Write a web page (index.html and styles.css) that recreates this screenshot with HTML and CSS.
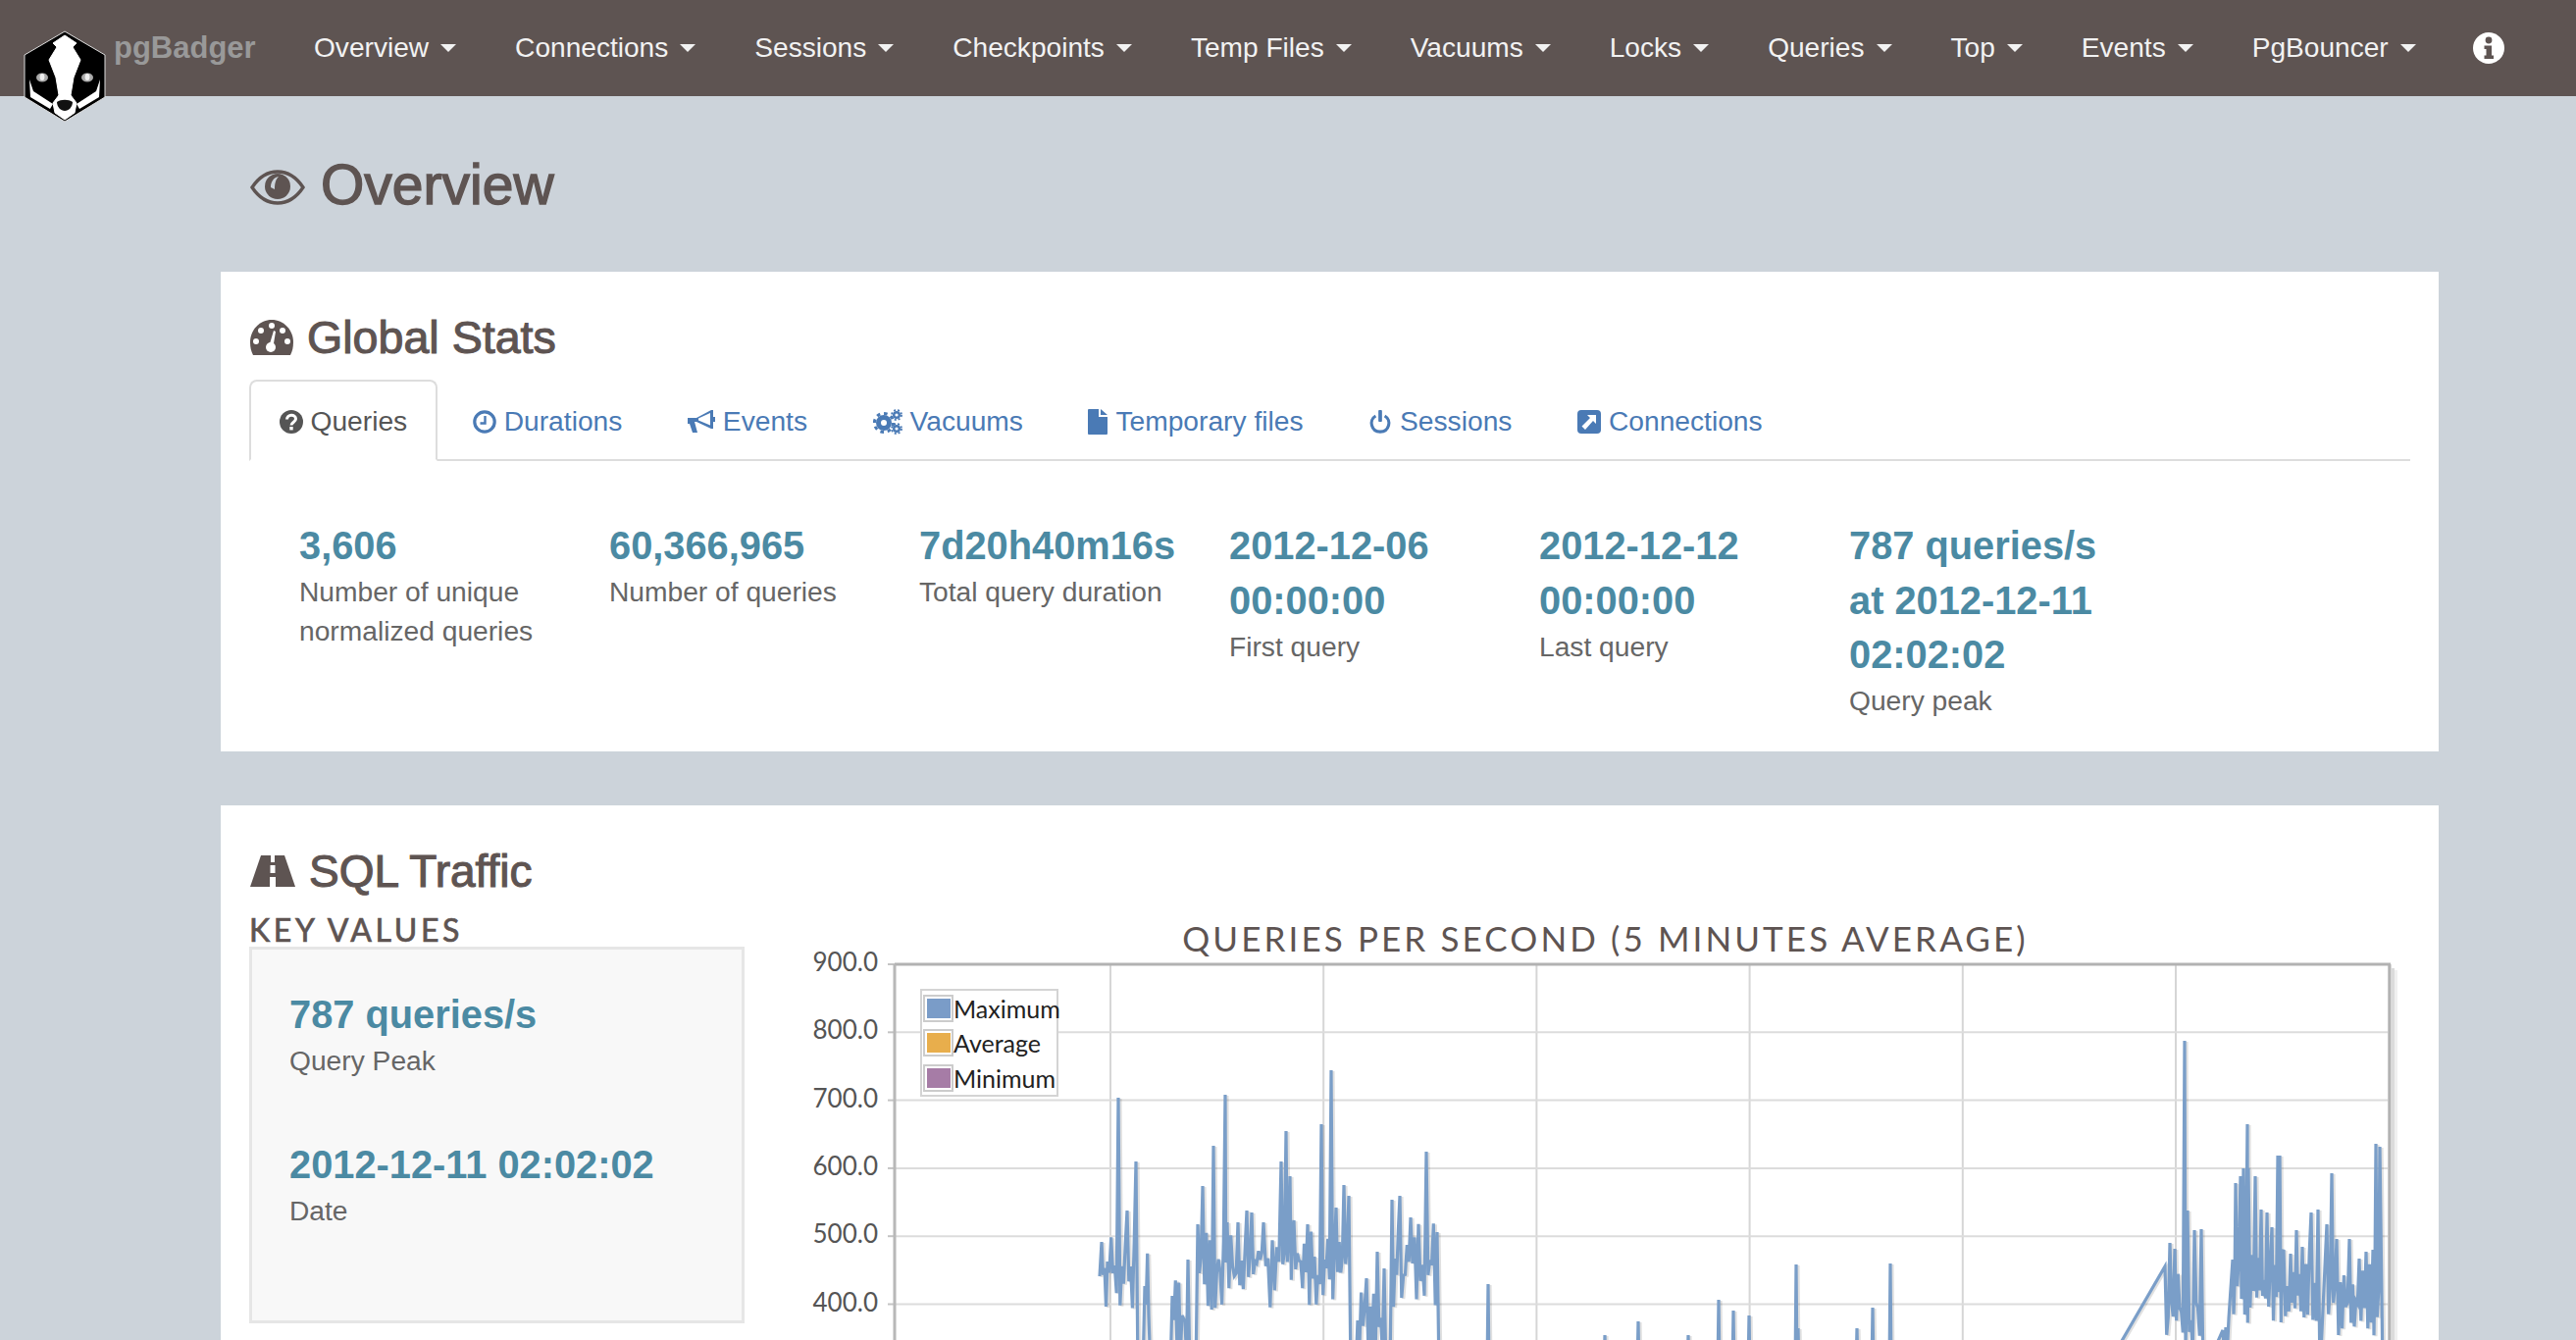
FILE: index.html
```html
<!DOCTYPE html>
<html lang="en">
<head>
    <meta charset="UTF-8">
    <title>pgBadger</title>
    <link rel="stylesheet" href="styles.css">
</head>
<body>
    <nav class="navbar">
        <svg class="logo" viewBox="0 0 84 94">
            <path d="M42 1 L83 25 V68 L42 93 L1 68 V25 Z" fill="#000" stroke="#ddd" stroke-width="1" stroke-linejoin="round"/>
            <path d="M42 5 L54 13 L50 17 L58 30 L51 48 L48 66 L54 74 L52 84 L42 91 L32 84 L30 74 L36 66 L33 48 L26 30 L34 17 L30 13 Z" fill="#fff" stroke="#fff" stroke-width="1" stroke-linejoin="round"/>
            <path d="M6 50 L10 62 L30 75 L27 80 L7 68 Z M78 50 L74 62 L54 75 L57 80 L77 68 Z" fill="#fff"/>
            <ellipse cx="19" cy="48" rx="6" ry="4.5" fill="#aaa"/>
            <ellipse cx="65" cy="48" rx="6" ry="4.5" fill="#aaa"/>
            <ellipse cx="19" cy="47.5" rx="2.4" ry="3.6" fill="#eee"/>
            <ellipse cx="65" cy="47.5" rx="2.4" ry="3.6" fill="#eee"/>
            <path d="M34 73 C38 70 46 70 50 73 C50 78 46 82 42 82 C38 82 34 78 34 73 Z" fill="#111"/>
        </svg>
        <span class="brand">pgBadger</span>
        <a class="nav-item">Overview<i class="caret"></i></a>
        <a class="nav-item">Connections<i class="caret"></i></a>
        <a class="nav-item">Sessions<i class="caret"></i></a>
        <a class="nav-item">Checkpoints<i class="caret"></i></a>
        <a class="nav-item">Temp Files<i class="caret"></i></a>
        <a class="nav-item">Vacuums<i class="caret"></i></a>
        <a class="nav-item">Locks<i class="caret"></i></a>
        <a class="nav-item">Queries<i class="caret"></i></a>
        <a class="nav-item">Top<i class="caret"></i></a>
        <a class="nav-item">Events<i class="caret"></i></a>
        <a class="nav-item">PgBouncer<i class="caret"></i></a>
        <svg class="nav-info" viewBox="0 0 32 32">
            <circle cx="16" cy="16" r="16" fill="#fff"/>
            <circle cx="16" cy="8" r="3.4" fill="#5e5452"/>
            <path d="M11.5 13.5 H19 V23.5 H21 V27 H11.5 V23.5 H13.5 V17 H11.5 Z" fill="#5e5452"/>
        </svg>
    </nav>

    <main class="content">
        <header class="page-title">
            <svg class="title-icon" viewBox="0 0 56 36">
                <path d="M2 18 C10 6 19 2 28 2 C37 2 46 6 54 18 C46 30 37 34 28 34 C19 34 10 30 2 18 Z" fill="none" stroke="currentColor" stroke-width="3.4"/>
                <circle cx="28" cy="17" r="13" fill="currentColor"/>
                <path d="M21 18 C21 12 24 8 29 7 C26 10 25 14 25 20 Z" fill="#ccd3da"/>
            </svg>
            <h1>Overview</h1>
        </header>

        <section class="card">
            <h2>
                <svg class="h2-icon gauge" viewBox="0 0 44 36">
                    <path d="M22 0 C34 0 44 10 44 23 C44 28 43 32 41 36 H3 C1 32 0 28 0 23 C0 10 10 0 22 0 Z" fill="currentColor"/>
                    <g fill="#fff">
                        <circle cx="22" cy="6" r="3"/><circle cx="11" cy="11" r="3"/><circle cx="33" cy="11" r="3"/>
                        <circle cx="6" cy="22" r="3"/><circle cx="38" cy="22" r="3"/>
                        <circle cx="21" cy="28" r="5"/>
                        <path d="M19.5 26 L24 11 L26 12 L23.5 27 Z"/>
                    </g>
                </svg>
                Global Stats
            </h2>
            <div class="tabs">
                <a class="tab active">
                    <svg class="tab-icon" viewBox="0 0 24 24"><circle cx="12" cy="12" r="12" fill="currentColor"/><path d="M7.5 9.5 C7.5 3.8 16.5 3.8 16.5 9 C16.5 12.5 12 12.5 12 15.5" fill="none" stroke="#fff" stroke-width="3"/><rect x="10.3" y="17" width="3.4" height="3.4" fill="#fff"/></svg>
                    Queries
                </a>
                <a class="tab">
                    <svg class="tab-icon" viewBox="0 0 24 24"><circle cx="12" cy="12" r="10.2" fill="none" stroke="currentColor" stroke-width="3.2"/><path d="M12.5 6 V13.5 H7.5" fill="none" stroke="currentColor" stroke-width="2.4"/></svg>
                    Durations
                </a>
                <a class="tab">
                    <svg class="tab-icon wide" viewBox="0 0 28 26"><path d="M0 9 H9 L24 1 H26 V20 H24 L9 13 H7 L10 24 H5 L2 15 H0 Z" fill="currentColor"/><path d="M11 9.5 L23 4 V16.5 L11 11.5 Z" fill="#fff"/><rect x="26" y="8" width="2" height="5" fill="currentColor"/></svg>
                    Events
                </a>
                <a class="tab">
                    <svg class="tab-icon wider" viewBox="0 0 30 26"><g fill="none" stroke="currentColor"><circle cx="11" cy="14" r="5.5" stroke-width="5"/><circle cx="11" cy="14" r="9.6" stroke-width="3" stroke-dasharray="3.6 3.9"/><circle cx="24" cy="6" r="2.8" stroke-width="2.4"/><circle cx="24" cy="6" r="5" stroke-width="1.8" stroke-dasharray="2 2"/><circle cx="24" cy="20" r="2.8" stroke-width="2.4"/><circle cx="24" cy="20" r="5" stroke-width="1.8" stroke-dasharray="2 2"/></g></svg>
                    Vacuums
                </a>
                <a class="tab">
                    <svg class="tab-icon narrow" viewBox="0 0 20 26"><path d="M1 0 H11 V8 H20 V25 Q20 26 19 26 H1 Q0 26 0 25 V1 Q0 0 1 0 Z M13 0 L20 6 H13 Z" fill="currentColor"/></svg>
                    Temporary files
                </a>
                <a class="tab">
                    <svg class="tab-icon" viewBox="0 0 24 26"><path d="M7 6.5 C-1 11 2 24 12 24 C22 24 25 11 17 6.5" fill="none" stroke="currentColor" stroke-width="3.4"/><rect x="10" y="0" width="4" height="13" rx="1" fill="currentColor"/></svg>
                    Sessions
                </a>
                <a class="tab">
                    <svg class="tab-icon" viewBox="0 0 24 24"><rect width="24" height="24" rx="4" fill="currentColor"/><path d="M10 5 H19 V14 L16 11 L8 20 L4.5 16.5 L13 8 Z" fill="#fff"/></svg>
                    Connections
                </a>
            </div>
            <div class="stats">
                <div class="stat"><div class="value">3,606</div><div class="label">Number of unique normalized queries</div></div>
                <div class="stat"><div class="value">60,366,965</div><div class="label">Number of queries</div></div>
                <div class="stat"><div class="value">7d20h40m16s</div><div class="label">Total query duration</div></div>
                <div class="stat"><div class="value">2012-12-06 00:00:00</div><div class="label">First query</div></div>
                <div class="stat"><div class="value">2012-12-12 00:00:00</div><div class="label">Last query</div></div>
                <div class="stat"><div class="value">787 queries/s at 2012-12-11 02:02:02</div><div class="label">Query peak</div></div>
            </div>
        </section>

        <section class="card traffic">
            <h2>
                <svg class="h2-icon road" viewBox="0 0 46 32">
                    <path d="M11 0 H35 L46 32 H0 Z" fill="currentColor"/>
                    <rect x="21" y="0" width="4" height="7" fill="#fff"/>
                    <rect x="20.5" y="10" width="5" height="8" fill="#fff"/>
                    <rect x="20" y="22" width="6" height="10" fill="#fff"/>
                </svg>
                SQL Traffic
            </h2>
            <div class="traffic-row">
                <div class="key-col">
                    <h3>KEY VALUES</h3>
                    <div class="well">
                        <div class="value">787 queries/s</div>
                        <div class="label">Query Peak</div>
                        <div class="value second">2012-12-11 02:02:02</div>
                        <div class="label">Date</div>
                    </div>
                </div>
                <div class="chart-col">
                    <div class="chart-title">QUERIES PER SECOND (5 MINUTES AVERAGE)</div>
                    <svg class="chart" id="chart" viewBox="830 977 1615 389"></svg>
                    <div class="legend">
                        <div class="legend-row"><span class="swatch"><i class="max"></i></span>Maximum</div>
                        <div class="legend-row"><span class="swatch"><i class="avg"></i></span>Average</div>
                        <div class="legend-row"><span class="swatch"><i class="min"></i></span>Minimum</div>
                    </div>
                </div>
            </div>
        </section>
    </main>
    <script src="chart.js"></script>
</body>
</html>
```
FILE: styles.css
```css
html, body {
    height: 1366px;
    overflow: hidden;
}
body {
    margin: 0;
    font-family: "Liberation Sans", Arial, sans-serif;
    font-size: 28.2px;
    color: #5e5452;
    background-color: #ccd3da;
}

/* top bar */
.navbar {
    position: relative;
    display: flex;
    align-items: center;
    height: 98px;
    padding-left: 116px;
    background-color: #5e5452;
}
.logo {
    position: absolute;
    left: 24px;
    top: 31px;
    width: 84px;
    height: 94px;
}
.brand {
    width: 174px;
    font-size: 31px;
    font-weight: bold;
    color: #999;
}
.nav-item {
    display: flex;
    align-items: center;
    padding: 0 30px;
    font-size: 28.1px;
    color: #f2f2f2;
}
.caret {
    width: 0;
    height: 0;
    margin-left: 12px;
    border-top: 8px solid #f2f2f2;
    border-left: 8px solid transparent;
    border-right: 8px solid transparent;
}
.nav-info {
    position: absolute;
    right: 73px;
    top: 33px;
    width: 32px;
    height: 32px;
}

/* page */
.content {
    padding: 0 140px 0 225px;
}
.page-title {
    display: flex;
    align-items: center;
    gap: 16px;
    height: 179px;
    padding-left: 30px;
    box-sizing: border-box;
}
.title-icon {
    width: 56px;
    height: 36px;
    margin-top: 6px;
}
h1 {
    margin: 0;
    font-size: 57px;
    font-weight: normal;
    -webkit-text-stroke: 1.4px #5e5452;
}
.card {
    margin-bottom: 55px;
    padding: 41px 29px 31.5px;
    background-color: #fff;
}
h2 {
    display: flex;
    align-items: center;
    height: 52px;
    margin: 0 0 17px;
    font-size: 46.6px;
    font-weight: normal;
    -webkit-text-stroke: 1.1px #5e5452;
}
.h2-icon {
    flex: none;
    margin: 0 14px 0 1px;
}
.gauge {
    width: 44px;
    height: 36px;
}
.road {
    width: 46px;
    height: 32px;
}

/* tabs */
.tabs {
    display: flex;
    gap: 5.5px;
    height: 83px;
    box-sizing: border-box;
    border-bottom: 2px solid #ddd;
}
.tab {
    display: flex;
    align-items: center;
    gap: 8px;
    height: 83px;
    padding: 2px 28.5px 0;
    box-sizing: border-box;
    border: 2px solid transparent;
    color: #4a7ab5;
}
.tab.active {
    color: #555;
    background-color: #fff;
    border-color: #ddd;
    border-bottom-color: #fff;
    border-radius: 8px 8px 0 0;
}
.tab-icon {
    width: 24px;
    height: 24px;
}
.tab-icon.wide {
    width: 28px;
    height: 26px;
}
.tab-icon.wider {
    width: 30px;
    height: 26px;
}
.tab-icon.narrow {
    width: 20px;
    height: 26px;
}

/* figures */
.stats {
    display: grid;
    grid-template-columns: repeat(6, 316px);
    padding: 59px 0 0 51px;
}
.stat {
    padding-right: 30px;
}
.value {
    font-size: 39.8px;
    line-height: 55.6px;
    font-weight: bold;
    color: #4b8aa3;
}
.label {
    margin-top: -1.5px;
    line-height: 40px;
    color: #666;
}

/* sql traffic */
.traffic {
    height: 546px;
    box-sizing: border-box;
    margin-bottom: 0;
    padding-bottom: 0;
    overflow: hidden;
}
.traffic h2 {
    margin-bottom: 23px;
    font-size: 46px;
}
.traffic-row {
    display: flex;
    gap: 70px;
}
.key-col {
    flex: none;
    width: 505px;
}
h3 {
    margin: 0;
    height: 28px;
    line-height: 22px;
    font-family: Lato, sans-serif;
    font-size: 32px;
    font-weight: normal;
    letter-spacing: 3.6px;
    -webkit-text-stroke: 0.7px #5e5452;
}
.well {
    height: 384px;
    box-sizing: border-box;
    padding: 39px 38px;
    background-color: #f8f8f8;
    border: 3px solid #e6e6e6;
}
.well .value.second {
    margin-top: 59px;
}
.chart-col {
    position: relative;
    width: 1615px;
}
.chart-title {
    height: 41px;
    line-height: 38px;
    text-align: center;
    font-family: Lato, sans-serif;
    font-size: 35px;
    letter-spacing: 3.1px;
}
.chart {
    display: block;
    width: 1615px;
    height: 389px;
    overflow: visible;
}
.chart text {
    font-family: Lato, sans-serif;
    font-size: 26px;
    fill: #555;
}
.legend {
    position: absolute;
    left: 109px;
    top: 71px;
    width: 141px;
    height: 110px;
    box-sizing: border-box;
    padding: 0 0 0 1px;
    background-color: #fff;
    border: 2px solid #d4d4d4;
    font-family: Lato, sans-serif;
    font-size: 25px;
    color: #222;
}
.legend-row {
    display: flex;
    align-items: center;
    height: 35.5px;
}
.swatch {
    display: block;
    flex: none;
    width: 24px;
    height: 20px;
    padding: 2px 1.5px;
    border: 2px solid #ccc;
}
.swatch i {
    display: block;
    height: 100%;
}
.swatch .max {
    background-color: #7a9cc8;
}
.swatch .avg {
    background-color: #e8ae4c;
}
.swatch .min {
    background-color: #a67ca6;
}
```
FILE: chart.js
```js
// draws the queries per second plot, coordinates are page pixels (see viewBox)
const NS = 'http://www.w3.org/2000/svg';
const chart = document.getElementById('chart');

const LEFT = 913, RIGHT = 2437, TOP = 982, BOTTOM = 1400;
const STEP_Y = 69.3, STEP_X = 217.2;

function add(name, attrs, text) {
    const el = document.createElementNS(NS, name);
    for (const key in attrs) el.setAttribute(key, attrs[key]);
    if (text) el.textContent = text;
    chart.appendChild(el);
}

// small seeded generator so that the picture is the same on every load
let seed = 12345;
function rnd(min, max) {
    seed = (seed * 16807) % 2147483647;
    return min + (seed / 2147483647) * (max - min);
}

// grid
for (let x = 1133; x < RIGHT; x += STEP_X) {
    add('line', { x1: x, x2: x, y1: TOP, y2: BOTTOM, stroke: '#d6d6d6', 'stroke-width': 2 });
}
const labels = ['900.0', '800.0', '700.0', '600.0', '500.0', '400.0'];
labels.forEach((text, i) => {
    const y = TOP + i * STEP_Y;
    if (i > 0) add('line', { x1: LEFT, x2: RIGHT, y1: y, y2: y, stroke: '#dcdcdc', 'stroke-width': 2 });
    add('line', { x1: 906, x2: LEFT, y1: y, y2: y, stroke: '#c4c4c4', 'stroke-width': 2 });
    add('text', { x: 896, y: y + 7, 'text-anchor': 'end' }, text);
});

// peaks read off the plot: [x, y], clusters are filled with noise between the peaks
const clusters = [
    { low: [1285, 1333], peaks: [[1124, 1265], [1130, 1285], [1141, 1118], [1150, 1233], [1159, 1183]] },
    { low: [1300, 1366], peaks: [[1168, 1310], [1172, 1340]] },
    { low: [1320, 1385], peaks: [[1196, 1320], [1206, 1340], [1212, 1283]] },
    { low: [1270, 1335], peaks: [[1222, 1247], [1227, 1208], [1238, 1167], [1250, 1115], [1252, 1245], [1263, 1245], [1272, 1233], [1277, 1235],
        [1289, 1245], [1307, 1183], [1312, 1152], [1316, 1198], [1320, 1243], [1334, 1247], [1348, 1145], [1358, 1090], [1363, 1230], [1371, 1207], [1376, 1218]] },
    { low: [1340, 1385], peaks: [[1385, 1345], [1394, 1302], [1405, 1275], [1412, 1292]] },
    { low: [1270, 1335], peaks: [[1420, 1222], [1428, 1218], [1439, 1240], [1455, 1173], [1466, 1255]] },
    { low: [1300, 1385], peaks: [[2208, 1290], [2213, 1266], [2218, 1272], [2228, 1060], [2231, 1233], [2238, 1253], [2245, 1252]] },
    { low: [1345, 1400], peaks: [[2267, 1355], [2273, 1343]] },
    { low: [1300, 1350], peaks: [[2277, 1283], [2280, 1205], [2285, 1198], [2288, 1190], [2292, 1145], [2293, 1190], [2300, 1198], [2306, 1232],
        [2312, 1235], [2317, 1250], [2323, 1177], [2325, 1177], [2329, 1273], [2336, 1277], [2342, 1253], [2348, 1270], [2357, 1235], [2364, 1232]] },
    { low: [1310, 1365], peaks: [[2373, 1247], [2378, 1195], [2383, 1262], [2396, 1262], [2406, 1282], [2413, 1275], [2420, 1273], [2423, 1165], [2427, 1168]] }
];

const points = [[1122, 1300]];
clusters.forEach((cluster, c) => {
    cluster.peaks.forEach((peak, i) => {
        points.push(peak);
        const next = cluster.peaks[i + 1];
        if (next) {
            const gap = next[0] - peak[0];
            const n = Math.min(7, Math.max(2, Math.floor(gap / 2)));
            for (let k = 1; k <= n; k++) {
                const x = peak[0] + gap * k / (n + 1);
                const y = k % 2 ? rnd(cluster.low[0] + 10, cluster.low[1]) : rnd(cluster.low[0] - 25, cluster.low[1] - 35);
                points.push([x, y]);
            }
        }
    });
    const last = cluster.peaks[cluster.peaks.length - 1];
    const following = clusters[c + 1];
    if (following && following.peaks[0][0] - last[0] > 6) {
        points.push([last[0] + 2, 1400]);
        if (following.peaks[0][0] < 2000) points.push([following.peaks[0][0] - 2, 1400]);
    }
    if (c === 5) {
        // quiet part of the day, single spikes only
        const spikes = [[1518, 1308], [1637, 1360], [1671, 1346], [1722, 1360], [1753, 1324], [1768, 1335], [1784, 1340],
            [1832, 1288], [1834, 1353], [1894, 1353], [1910, 1332], [1928, 1287]];
        spikes.forEach(s => {
            points.push([s[0] - 1, 1400], s, [s[0] + 1, 1400]);
        });
        points.push([2150, 1390]);
    }
});
points.push([2430, 1400]);

const line = points.map(p => p[0].toFixed(1) + ',' + p[1].toFixed(1)).join(' ');
add('polyline', { points: line, fill: 'none', stroke: '#000', 'stroke-opacity': 0.12, 'stroke-width': 3.2, transform: 'translate(2 1)' });
add('polyline', { points: line, fill: 'none', stroke: '#7a9ec8', 'stroke-width': 3.2 });

// frame with its shadow
add('rect', { x: RIGHT + 2, y: TOP + 4, width: 3, height: BOTTOM - TOP, fill: '#000', 'fill-opacity': 0.14 });
add('rect', { x: RIGHT + 5, y: TOP + 6, width: 3, height: BOTTOM - TOP, fill: '#000', 'fill-opacity': 0.06 });
add('line', { x1: LEFT, x2: RIGHT + 1, y1: TOP, y2: TOP, stroke: '#b2b2b2', 'stroke-width': 3 });
add('line', { x1: LEFT, x2: LEFT, y1: TOP, y2: BOTTOM, stroke: '#b8b8b8', 'stroke-width': 3 });
add('line', { x1: RIGHT, x2: RIGHT, y1: TOP, y2: BOTTOM, stroke: '#b2b2b2', 'stroke-width': 3 });
```
